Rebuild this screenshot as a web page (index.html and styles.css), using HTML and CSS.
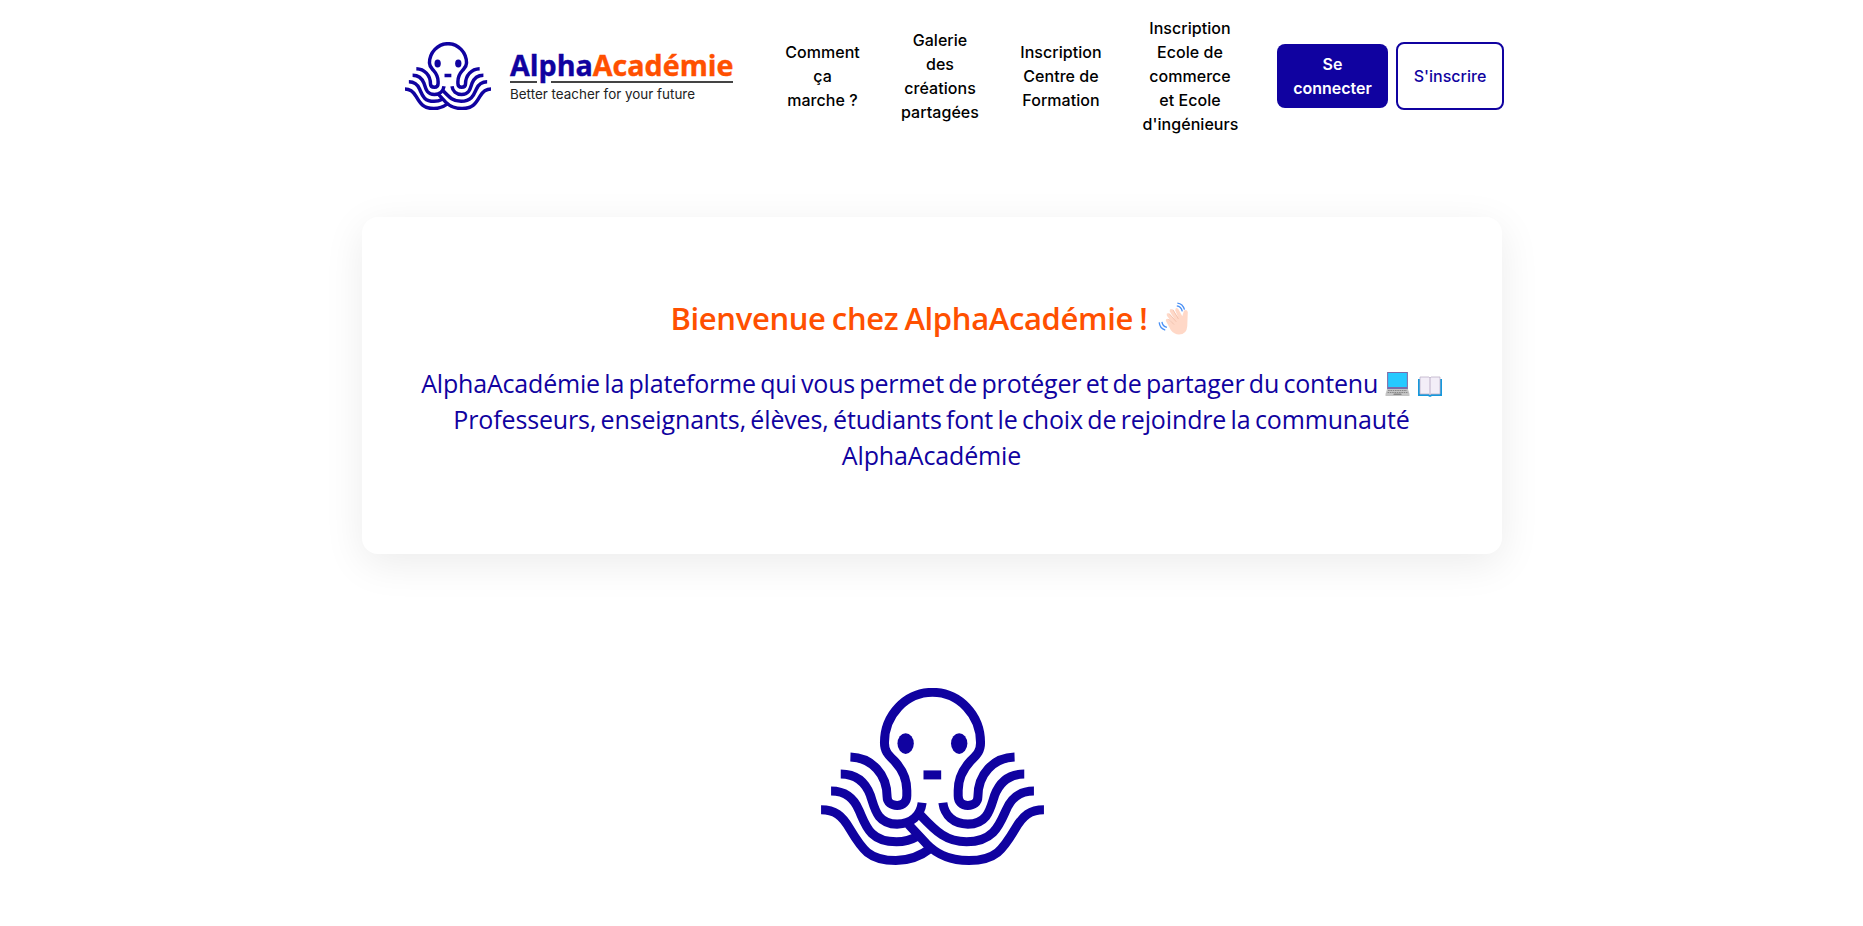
FILE: index.html
```html
<!DOCTYPE html>
<html lang="fr">
<head>
<meta charset="utf-8">
<title>AlphaAcadémie</title>
<link rel="stylesheet" href="styles.css">
</head>
<body>
<svg class="defs" aria-hidden="true">
  <symbol id="octopus" viewBox="64 53 668 532">
    <g fill="none" stroke="currentColor" stroke-width="27">
      <path d="M152 260C215 262 262 310 262 380C262 396 275 405 292 405C310 405 321 394 321 376V360C321 330 310 300 285 273C268 255 254 245 254 217A144 151 0 0 1 542 217C542 245 528 255 511 273C486 300 475 330 475 360V376C475 394 486 405 504 405C521 405 534 396 534 380C534 310 581 262 644 260"/>
      <path d="M123 311C165 311 195 330 212 375C224 410 230 461 292 461C335 461 362 435 367 397"/>
      <path d="M673 311C631 311 601 330 584 375C572 410 566 461 504 461C461 461 434 435 429 397"/>
      <path d="M94 362C140 362 163 385 178 420C198 465 210 514 290 514C315 514 335 508 354 497"/>
      <path d="M702 362C656 362 633 385 618 420C598 465 580 514 500 514C440 514 410 485 362 434"/>
      <path d="M64 418C105 418 127 435 150 475C187 537 208 570 288 570C330 570 365 555 393 533"/>
      <path d="M732 418C691 418 669 435 646 475C609 537 588 570 507 570C440 570 405 545 380 520L326 462"/>
    </g>
    <g fill="currentColor"><ellipse cx="317.500" cy="219.500" rx="24.500" ry="31"/><ellipse cx="478" cy="219.500" rx="24.500" ry="31"/><path d="M371 300h53v27h-53z"/></g>
  </symbol>
</svg>
<header class="header">
  <a class="brand">
    <svg class="brand-mark"><use href="#octopus"/></svg>
    <svg class="brand-text" viewBox="0 0 232 72">
      <text class="brand-name" x="0" y="34" textLength="223.500" lengthAdjust="spacingAndGlyphs">Alpha<tspan class="accent">Académie</tspan></text>
      <path class="rule" d="M0 40h27M41 40h182"/>
      <text class="tagline" x="0" y="57" textLength="185" lengthAdjust="spacingAndGlyphs">Better teacher for your future</text>
    </svg>
  </a>
  <nav class="nav">
    <a>Comment<br>ça<br>marche ?</a>
    <a>Galerie<br>des<br>créations<br>partagées</a>
    <a>Inscription<br>Centre de<br>Formation</a>
    <a>Inscription<br>Ecole de<br>commerce<br>et Ecole<br>d'ingénieurs</a>
  </nav>
  <div class="actions">
    <a class="btn primary">Se<br>connecter</a>
    <a class="btn outline">S'inscrire</a>
  </div>
</header>
<main>
  <section class="card">
    <h1 class="title"><span class="title-text">Bienvenue chez AlphaAcadémie !</span>
      <svg class="wave" viewBox="0 0 28 30"><path fill="#ffd8c7" d="M7 17Q7 14.500 9.500 15.500L13 19L8 12.500Q7 9.500 10 10.500L15 16L10.500 8.500Q10.500 5 13.500 7L18 13.500L15.500 7.500Q16 4 18.500 6.500L22 13L23.500 8Q26 6 27 9L26.500 22Q26 29.500 19 29.500Q14.500 29.500 11.500 25.500Z"/><path d="m9.500 15.500 5 5M10 10.500l6.500 7.500M13.500 7l5 8.500" fill="none" stroke="#f0bfab" stroke-width=".8"/><path d="M17 3.500q4 .5 5 5M17.500 1q5 .5 6.500 6M3.500 18q.5 4 4.500 5M1 18.500q.5 5.500 5.500 7" fill="none" stroke="#4a90f5" stroke-width="1.200"/></svg>
    </h1>
    <p class="lead">
      <span class="intro">AlphaAcadémie la plateforme qui vous permet de protéger et de partager du contenu</span>
      <svg class="emoji laptop" viewBox="0 0 24 25" preserveAspectRatio="none"><path fill="#7b6ba8" d="M2 0h20v17H2z"/><path fill="#26c9ff" d="M3 1h18v14H3z"/><path fill="#c4c4c4" d="M2 17h20l1.500 5v2H.5v-2z"/><path d="M3 18.500h18M2.500 20.500h19" stroke="#888" stroke-dasharray="1.500 .7"/><path fill="#888" d="M8.500 21.500h7l.5 1.500H8z"/></svg>
      <svg class="emoji book" viewBox="0 0 24 25"><path fill="#1598dc" d="M0 7h24v17H14l-2 1-2-1H0z"/><path fill="#f3eef8" stroke="#bdb0c8" stroke-width=".8" d="M2 5h9l1 1 1-1h9v17h-9l-1 1-1-1H2z"/><path stroke="#bdb0c8" d="M12 6v17"/></svg><br>
      <span>Professeurs, enseignants, élèves, étudiants font le choix de rejoindre la communauté</span><br>
      <span>AlphaAcadémie</span>
    </p>
  </section>
  <svg class="hero"><use href="#octopus"/></svg>
</main>
</body>
</html>
```
FILE: styles.css
```css
* { box-sizing: border-box; }
body { margin: 0; background: #fff; color: #000; font-family: Inter, sans-serif; overflow: hidden; }
.defs { position: absolute; width: 0; height: 0; }
.header { height: 152px; padding-left: 405px; display: flex; align-items: center; }
.brand { display: flex; align-items: center; width: 379.500px; color: #1002a0; }
.brand-mark { width: 86px; height: 68.500px; }
.brand-text { width: 232px; height: 72px; margin: 4px 0 0 18.500px; overflow: visible; }
.brand-name { font: 700 28.500px "Open Sans", sans-serif; fill: #1002a0; stroke: #1002a0; stroke-width: .4px; }
.brand-name .accent { fill: #ff5000; stroke: #ff5000; }
.rule { stroke: #444; stroke-width: 2; }
.tagline { font: 400 13.500px Inter, sans-serif; fill: #222; }
.nav { display: grid; grid-template-columns: 76px 79px 83px 95px; column-gap: 40px; align-items: center; text-align: center; font-size: 16px; font-weight: 500; line-height: 24px; letter-spacing: .05px; }
.nav a { white-space: nowrap; }
.actions { display: flex; align-items: center; gap: 8px; margin-left: 39.500px; font-size: 16px; line-height: 24px; text-align: center; }
.btn { border-radius: 8px; }
.primary { width: 111px; padding: 8px 0; background: #1002a0; color: #fff; font-weight: 600; }
.outline { width: 108px; padding: 20px 0; border: 2px solid #1002a0; color: #1002a0; font-weight: 500; }
main { display: flex; flex-direction: column; align-items: center; padding-top: 65px; }
.card { width: 1140px; height: 337px; border-radius: 16px; padding-top: 77px; box-shadow: 0 10px 40px rgba(0, 0, 0, .08); text-align: center; font-family: "Open Sans", sans-serif; }
.title { margin: 0; height: 48px; padding-right: 4px; display: flex; justify-content: center; align-items: center; gap: 10px; color: #ff5000; font-size: 31px; font-weight: 600; letter-spacing: -.35px; word-spacing: -1.500px; }
.wave { width: 31px; height: 33px; }
.lead { margin: 22.500px 0 0; color: #1002a0; font-size: 25px; line-height: 36px; letter-spacing: -.14px; word-spacing: -2px; white-space: nowrap; }
.intro { letter-spacing: -.18px; }
.emoji { width: 24px; height: 25px; vertical-align: -4px; }
.laptop { width: 25px; margin-left: 3px; }
.book { margin-left: 3px; }
.hero { width: 223px; height: 177.500px; margin: 133.500px 0 0 2px; color: #1002a0; }
```
